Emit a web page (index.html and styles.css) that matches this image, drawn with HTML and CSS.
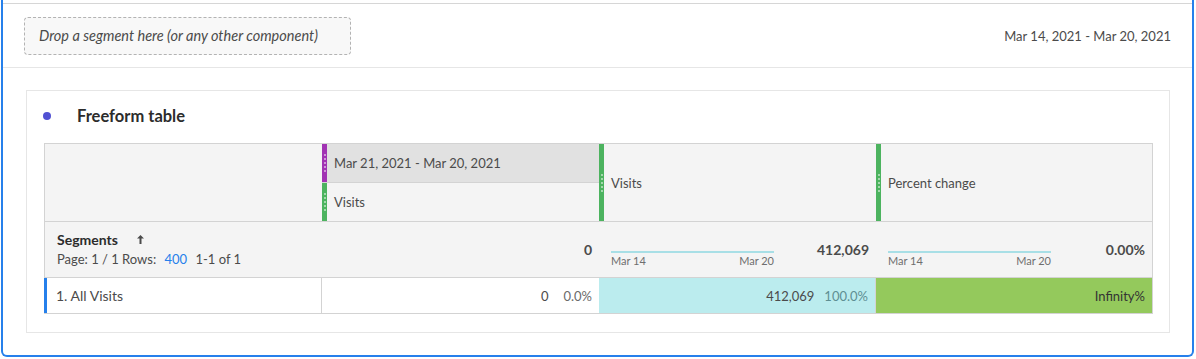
FILE: index.html
```html
<!DOCTYPE html>
<html>
<head>
  <title>Freeform table</title>
  <meta charset="UTF-8">
  <link rel="stylesheet" href="styles.css">
</head>
<body>
  <div class="frame">
    <div class="frame-top"></div>

    <div class="segment-bar">
      <div class="drop-zone">Drop a segment here (or any other component)</div>
      <div class="date-range">Mar 14, 2021 - Mar 20, 2021</div>
    </div>

    <div class="panel">
      <div class="panel-title">
        <span class="dot"></span>
        <h3>Freeform table</h3>
      </div>

      <div class="ff-table">
        <!-- header row -->
        <div class="hcell"></div>
        <div class="hcell stacked">
          <div class="sub sub-dim">
            <span class="bar purple"><i></i><i></i><i></i><i></i><i></i></span>
            <span class="hlabel">Mar 21, 2021 - Mar 20, 2021</span>
          </div>
          <div class="sub">
            <span class="bar green"><i></i><i></i><i></i><i></i><i></i></span>
            <span class="hlabel">Visits</span>
          </div>
        </div>
        <div class="hcell">
          <span class="bar green"><i></i><i></i><i></i><i></i><i></i></span>
          <span class="hlabel">Visits</span>
        </div>
        <div class="hcell">
          <span class="bar green"><i></i><i></i><i></i><i></i><i></i></span>
          <span class="hlabel">Percent change</span>
        </div>

        <!-- summary row -->
        <div class="scell first">
          <div class="seg-title">Segments
            <svg class="sort" width="9" height="10" viewBox="0 0 9 10"><path d="M4.5 1 L8 4.5 H5.5 V10 H3.5 V4.5 H1 Z" fill="#4b4b4b"/></svg>
          </div>
          <div class="pager">Page: 1 / 1 Rows: <a>400</a> 1-1 of 1</div>
        </div>
        <div class="scell total">0</div>
        <div class="scell spark-cell">
          <div class="spark">
            <div class="spark-line"></div>
            <div class="spark-labels"><span>Mar 14</span><span>Mar 20</span></div>
          </div>
          <div class="total">412,069</div>
        </div>
        <div class="scell spark-cell">
          <div class="spark">
            <div class="spark-line"></div>
            <div class="spark-labels"><span>Mar 14</span><span>Mar 20</span></div>
          </div>
          <div class="total">0.00%</div>
        </div>

        <!-- data row -->
        <div class="dcell name">1. All Visits</div>
        <div class="dcell num wide">0 <span class="pct">0.0%</span></div>
        <div class="dcell num cyan">412,069 <span class="pct">100.0%</span></div>
        <div class="dcell num lime">Infinity%</div>
      </div>
    </div>
  </div>
</body>
</html>
```

FILE: styles.css
```css
:root {
  --blue: #2680eb;
  --text: #4b4b4b;
  --title: #2c2c2c;
  --line: #d3d3d3;
  --soft-line: #e6e6e6;
  --head-bg: #f4f4f4;
  --head-dim: #e1e1e1;
  --green: #4cb35f;
  --purple: #a133b3;
  --cyan-cell: #bbecee;
  --lime-cell: #94c95c;
}

body {
  margin: 0;
  width: 1196px;
  height: 359px;
  background: #fff;
  font-family: Lato, "Open Sans", sans-serif;
  color: var(--text);
}

.frame {
  margin: 0 2px 0 1px;
  height: 355px;
  border: 2px solid var(--blue);
  border-top: none;
  border-radius: 0 0 6px 6px;
}

.frame-top {
  height: 4px;
  border-bottom: 1px solid #d6d6d6;
  box-sizing: border-box;
}

.segment-bar {
  display: flex;
  align-items: center;
  justify-content: space-between;
  height: 63px;
  padding: 0 21px;
  border-bottom: 1px solid var(--soft-line);
}

.drop-zone {
  width: 327px;
  height: 38px;
  box-sizing: border-box;
  border: 1px dashed #b3b3b3;
  border-radius: 4px;
  background: #f8f8f8;
  padding-left: 14px;
  display: flex;
  align-items: center;
  font-style: italic;
  font-size: 14.5px;
  color: var(--text);
}

.date-range {
  font-size: 13px;
}

.panel {
  margin: 22px 22px 0 23px;
  border: 1px solid var(--soft-line);
  padding: 0 16px 18px 17px;
}

.panel-title {
  display: flex;
  align-items: center;
  height: 50px;
  margin-bottom: 2px;
}

.dot {
  width: 8px;
  height: 8px;
  border-radius: 50%;
  background: #5151d3;
  margin: 0 26px 0 -1px;
}

.panel-title h3 {
  margin: 0;
  font-size: 16.5px;
  font-weight: 700;
  color: var(--title);
}

/* table */
.ff-table {
  display: grid;
  grid-template-columns: 277px 277px 277px 1fr;
  border: 1px solid var(--line);
  font-size: 13px;
}

.hcell {
  height: 77px;
  background: var(--head-bg);
  border-bottom: 1px solid var(--line);
  display: flex;
  align-items: center;
}

.hcell.stacked {
  flex-direction: column;
  align-items: stretch;
}

.sub {
  flex: 1;
  display: flex;
  align-items: center;
}

.sub-dim {
  background: var(--head-dim);
  border-bottom: 1px solid var(--line);
}

.bar {
  align-self: stretch;
  width: 5px;
  flex-shrink: 0;
  display: flex;
  flex-direction: column;
  justify-content: center;
  align-items: center;
  gap: 2px;
}

.bar i {
  width: 2px;
  height: 2px;
  border-radius: 50%;
  background: rgba(255, 255, 255, 0.65);
}

.bar.green { background: var(--green); }
.bar.purple { background: var(--purple); }

.hlabel {
  margin-left: 7px;
  font-size: 13px;
}

.scell {
  background: var(--head-bg);
  border-bottom: 1px solid var(--line);
  box-sizing: border-box;
  height: 56px;
}

.scell.first {
  padding: 7px 12px 0;
}

.seg-title {
  font-weight: 700;
  font-size: 14px;
  color: var(--title);
  display: flex;
  align-items: center;
  gap: 18px;
  height: 20px;
}

.pager {
  margin-top: 2px;
}

.pager a {
  color: var(--blue);
  margin: 0 5px;
}

.scell.total,
.total {
  font-weight: 700;
  font-size: 14px;
  text-align: right;
}

.scell.total {
  padding: 19px 7px 0 0;
}

.spark-cell {
  display: flex;
  padding: 0 7px 0 12px;
}

.spark {
  width: 163px;
  padding-top: 29px;
}

.spark-line {
  height: 2px;
  background: #a8dfe6;
}

.spark-labels {
  display: flex;
  justify-content: space-between;
  font-size: 11px;
  color: #6e6e6e;
  margin-top: 1px;
}

.spark-cell .total {
  flex: 1;
  padding-top: 19px;
}

.dcell {
  height: 35px;
  display: flex;
  align-items: center;
}

.dcell.name {
  padding-left: 9px;
  border-left: 3px solid var(--blue);
  margin-left: -1px;
  border-right: 1px solid var(--line);
  font-size: 14px;
}

.dcell.num {
  justify-content: flex-end;
  padding-right: 7px;
  gap: 10px;
}

.dcell.wide {
  gap: 15px;
}

.pct {
  color: #6b6b6b;
}

.dcell.cyan {
  background: var(--cyan-cell);
  border-right: 1px solid var(--line);
}

.dcell.cyan .pct {
  color: #5e8f93;
}

.dcell.lime {
  background: var(--lime-cell);
  color: #333;
}
```
